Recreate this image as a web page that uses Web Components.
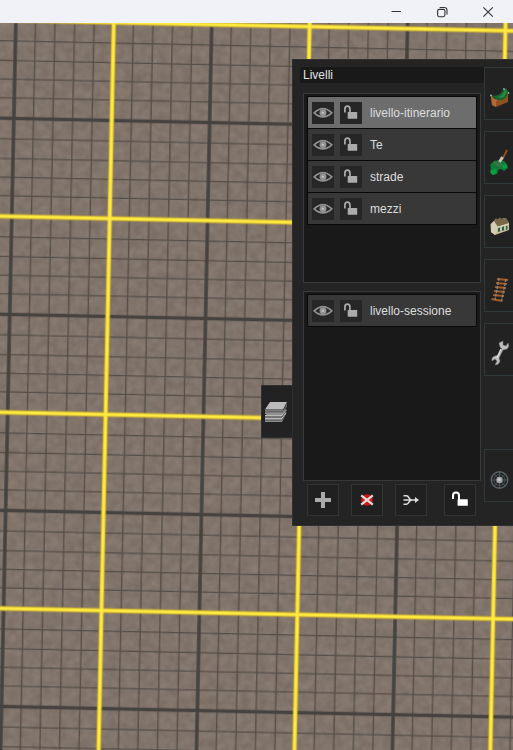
<!DOCTYPE html>
<html lang="it">
<head>
<meta charset="utf-8">
<meta name="viewport" content="width=device-width, initial-scale=1">
<title>Livelli</title>
<style>
html, body { height: 100%; margin: 0; }
body { font: 12px/16px "Liberation Sans", Arial, sans-serif; color: #d8d8d8; overflow: hidden; }
</style>
</head>
<body>
<editor-window></editor-window>
<script>
const icons = {
  minimize: ['0 0 12 12', '<path d="M1.5 5.5h9.5" stroke="#333" fill="none"/>'],
  restore: ['0 0 12 12', '<rect x="1.6" y="3.4" width="7.3" height="7.3" rx="1.6" fill="none" stroke="#333" stroke-width="1.1"/><path d="M3.6 1.5h4.6a2.8 2.8 0 0 1 2.8 2.8v4.3" fill="none" stroke="#333" stroke-width="1.1"/>'],
  close: ['0 0 12 12', '<path d="M1.4 1.3l9.4 9.4M10.8 1.3L1.4 10.7" stroke="#333" stroke-width="1.1" fill="none"/>'],
  eye: ['0 0 20 20', '<path d="M1.2 9.800Q10 1.300 18.800 9.800Q10 18 1.200 9.800Z" fill="none" stroke="#8f8f8f" stroke-width="1.700"/><circle cx="10" cy="9.700" r="3.500" fill="#929292"/><circle cx="10" cy="9.700" r="1.200" fill="#c0c0c0"/>'],
  lock: ['0 0 20 20', '<path d="M3.900 9.500V6a2.500 2.800 0 0 1 5 0V9.800" fill="none" stroke="currentColor" stroke-width="1.700"/><rect x="6.700" y="9" width="9.500" height="6.800" rx=".5" fill="currentColor"/>'],
  bigLock: ['0 0 20 20', '<path d="M3 9V5.600a3 3 0 0 1 6 0V10" fill="none" stroke="#fff" stroke-width="2"/><rect x="7.600" y="9.200" width="10.200" height="6.600" rx=".5" fill="#fff"/>'],
  add: ['0 0 20 20', '<path d="M8 2h4v6h6v4h-6v6H8v-6H2V8h6z" fill="#aaa"/>'],
  remove: ['0 0 20 20', '<circle cx="10" cy="10" r="5.800" fill="#d81512"/><path d="M4.200 5.400l11.600 9.200M15.800 5.400L4.200 14.600" stroke="#dedede" stroke-width="2.200"/>'],
  merge: ['0 0 20 20', '<path d="M2.500 5.800h3c2.500 0 2.500 4.200 5 4.200c-2.500 0-2.500 4.200-5 4.200h-3M2.500 10H16" fill="none" stroke="#ddd" stroke-width="1.600"/><path d="M14 7l4 3-4 3z" fill="#ddd"/>'],
  layers: ['0 0 22 21', '<path d="M0 20v-6l4-5h17l-1 5-3 6z" fill="#8d8d8d"/><path d="M0 16.700h17l4-6M0 13.500h17l4-6" fill="none" stroke="#bbb" stroke-width="1.200"/><path d="M0 15.100h17l4-6M0 18.200h17l3-5" fill="none" stroke="#505050" stroke-width=".8"/><path d="M0 11V8h22l-4 4H0z" fill="#929292"/><path d="M0 7.500L5 0h17l-4 7.500z" fill="#bababa"/><path d="M0 8.500h18l4-7v3l-4 6H0z" fill="#646464"/>'],
  terrain: ['0 0 24 28', '<path d="M2 11l1 10 4 2 12-5V9l-4 6-9 1z" fill="#93501f"/><path d="M2 12l5 4v7l-4-2z" fill="#b26a35"/><path d="M1.500 11q9 3 13-6l3-.5L19.500 8q-2 7-7 8-5 .8-11-5z" fill="#17652b"/><path d="M8 13q6-1 8-8l2 2q-2 6-5 7z" fill="#2b873f"/><g fill="#aaa"><circle cx="2" cy="11.500" r="1"/><circle cx="7" cy="16" r=".7"/><circle cx="15" cy="5" r=".9"/><circle cx="19.500" cy="9" r=".9"/></g>'],
  broom: ['0 0 24 28', '<path d="M18 2l-5 10" stroke="#925126" stroke-width="1.800"/><path d="M1 17l4-4 6-1 4 1 3 3 1 4-4 3-3-2-3 1-1 4-4 1-3-3 1-4z" fill="#107b32"/><path d="M4 15q4-3 8-1l2 4q-5 2-10-3z" fill="#35754a"/><path d="M2 22l5-1 1 4-4 2q-3-1-2-5zM13 17l4-1 1 4-4 1z" fill="#0a9d42"/><path d="M13.500 9l-3 5" stroke="#c8c8ba" stroke-width="2.800"/>'],
  house: ['0 0 24 28', '<path d="M1.500 12l6-5 1 1 2-2 1 1 5-1 3.500 5v7L6 23l-4-3z" fill="#c6bca0"/><path d="M2 12l5-6 2 2 2-3 1 2 5-1 3 5-12 4z" fill="#796848"/><path d="M2 12l3-3 4 6-3 8-4-3z" fill="#d4ccb5"/><path d="M9 16v4l2-.6v-4zm4-1v4l2-.7v-4zm4-1v4l1.500-.5v-4z" fill="#1f6847"/><path d="M9 15l11-3" stroke="#e0d4b8" stroke-width="1.200"/>'],
  rail: ['0 0 24 28', '<path d="M8 3l11 1M7 7l11 1M6 11l11 1M5 15l11 1M4 19l11 1M2.500 23l11 2" stroke="#a65b23" stroke-width="2.200"/><path d="M10 2L6 24M17 3l-4.500 22" stroke="#8a8179" stroke-width="1.400" stroke-dasharray="3 1"/>'],
  wrench: ['0 0 24 28', '<path d="M11 7l-1-4 4-2v4l3 1 2-3q2 3-1 6l-4 1-4 8 1 3q-1 4-5 4l2-4-2-2-3 2q-1-4 3-5l3-1 4-6z" fill="#bdbdbd" stroke="#777" stroke-width=".5"/><path d="M12 9L8 18" stroke="#dedede" stroke-width="1.500"/>'],
  wheel: ['0 0 24 28', '<circle cx="10.500" cy="14" r="8.300" fill="#202526" stroke="#596366" stroke-width="1.400"/><path d="M10.500 6v16M2.500 14h16M5 8.300l11 11.400M16 8.300L5 19.700" stroke="#59635f" stroke-width=".8"/><circle cx="10.500" cy="14" r="5.500" fill="none" stroke="#434c50"/><circle cx="10.500" cy="14" r="3.200" fill="#9da2a4"/><circle cx="10" cy="13.500" r="1.600" fill="#c8c8c8"/>']
};
function glyph(name, w, h = w) {
  const [box, shapes] = icons[name];
  return `<svg aria-hidden="true" width="${w}" height="${h}" viewBox="${box}">${shapes}</svg>`;
}
const reset = `
  * { box-sizing: border-box; }
  svg { display: block; flex: none; }
  button { font: inherit; color: inherit; margin: 0; padding: 0; display: flex; align-items: center; justify-content: center; border-radius: 0; }
`;
class Base extends HTMLElement {
  connectedCallback() {
    if (!this.shadowRoot) {
      this.attachShadow({ mode: 'open' });
      const template = document.createElement('template');
      template.innerHTML = `<style>${reset}</style>${this.render()}`;
      this.shadowRoot.append(template.content.cloneNode(true));
    }
  }
}
customElements.define('window-bar', class extends Base {
  render() {
    return `<style>
      :host { display: flex; justify-content: flex-end; height: 23px; padding-right: 2px; box-sizing: border-box; background: #f0f2f7; }
      button { width: 46px; border: 0; background: none; }
      div { display: flex; }
    </style>
    <div><button aria-label="Riduci a icona">${glyph('minimize', 12)}</button><button aria-label="Ripristina">${glyph('restore', 12)}</button><button aria-label="Chiudi">${glyph('close', 12)}</button></div>`;
  }
});
customElements.define('ground-map', class extends Base {
  render() {
    const minor = [[20, 21], [40, 41], [60, 60], [80, 79], [120, 121], [140, 141], [160, 160], [180, 179]]
      .map(([x, y]) => `M${x} 0V200M0 ${y}H200`).join('');
    return `<style>:host { display: block; overflow: hidden; background: #81746b; } svg { width: 100%; height: 100%; }</style>
    <svg aria-hidden="true"><defs>
      <filter id="grain" x="0" y="0" width="100%" height="100%" color-interpolation-filters="sRGB"><feTurbulence type="fractalNoise" baseFrequency=".12" numOctaves="2" seed="5"/>
      <feColorMatrix values=".09 0 0 0 .463  .09 0 0 0 .411  .09 0 0 0 .374  0 0 0 0 1"/></filter>
      <pattern id="grid" width="200" height="200" patternUnits="userSpaceOnUse" patternTransform="matrix(.979 .0205 -.0205 .98 113.8 -.5)">
        <path d="${minor}" stroke="#4a4540" stroke-opacity=".8" stroke-width="1.400"/>
        <path d="M100 0V200M0 100H200" stroke="#454240" stroke-width="3.600"/>
        <path d="M0 0H200V200H0z" fill="none" stroke="#c3a536" stroke-width="5"/>
        <path d="M0 0H200V200H0z" fill="none" stroke="#ffea3f" stroke-width="3.200"/>
      </pattern></defs>
      <rect width="100%" height="100%" filter="url(#grain)"/><rect width="100%" height="100%" fill="url(#grid)"/></svg>`;
  }
});
customElements.define('layer-row', class extends Base {
  render() {
    return `<style>
      :host { display: flex; align-items: center; padding-left: 4px; min-height: 31px; background: #383838; color: #dedede; }
      :host([selected]) { background: #6d6d6d; }
      button { width: 22px; height: 22px; border: 0; margin-right: 6px; background: #262626; color: #ababab; }
      span { margin-left: 2px; }
    </style>
    <button aria-label="Mostra o nascondi">${glyph('eye', 20)}</button><button aria-label="Blocca o sblocca">${glyph('lock', 20)}</button><span><slot></slot></span>`;
  }
});
customElements.define('layer-list', class extends Base {
  render() {
    return `<style>
      :host { display: block; padding: 2px 3px; border: 1px solid #393939; background: #191919; }
      div { display: grid; gap: 1px; padding: 1px; background: #080808; }
    </style><div><slot></slot></div>`;
  }
});
customElements.define('tool-button', class extends Base {
  render() {
    return `<style>:host { display: block; } button { width: 32px; height: 32px; border: 1px solid #343434; background: #202020; }</style>
    <button aria-label="${this.getAttribute('label')}">${glyph(this.getAttribute('icon'), 20)}</button>`;
  }
});
customElements.define('tool-tab', class extends Base {
  render() {
    return `<style>:host { display: block; } button { width: 100%; height: 53px; padding: 8px 0 0 4px; border: 1px solid #303a3d; border-right: 0; background: #222; justify-content: flex-start; overflow: hidden; }</style>
    <button aria-label="${this.getAttribute('label')}">${glyph(this.getAttribute('icon'), 24, 28)}</button>`;
  }
});
customElements.define('layer-panel', class extends Base {
  render() {
    return `<style>
      :host { display: grid; grid-template-columns: 31px 221px; align-items: start; }
      .handle { height: 53px; margin-top: 326px; border: 1px solid #303030; border-right: 0; background: #222; padding: 2px 2px 0 0; }
      .panel { display: grid; grid-template-columns: 1fr 29px; background: #242424; border: 1px solid #303030; border-right: 0; padding: 7px 0 9px 7px; }
      h2 { margin: 0 0 10px; padding-left: 3px; font: inherit; color: #e4e4e4; background: #191919; }
      layer-list { margin: 0 3px 8px; min-height: 190px; }
      .actions { display: grid; grid-template-columns: 44px 44px 1fr 32px; padding: 0 8px 0 7px; margin-top: -5px; }
      .tabs { display: flex; flex-direction: column; gap: 11px; }
      .tabs tool-tab:last-child { margin-top: 62px; }
    </style>
    <button class="handle" aria-label="Pannello livelli">${glyph('layers', 22, 21)}</button>
    <section class="panel" aria-label="Livelli">
      <div><h2>Livelli</h2>
        <layer-list><layer-row selected>livello-itinerario</layer-row><layer-row>Te</layer-row><layer-row>strade</layer-row><layer-row>mezzi</layer-row></layer-list>
        <layer-list><layer-row>livello-sessione</layer-row></layer-list>
        <div class="actions"><tool-button icon="add" label="Aggiungi"></tool-button><tool-button icon="remove" label="Elimina"></tool-button><tool-button icon="merge" label="Unisci"></tool-button><tool-button icon="bigLock" label="Sblocca"></tool-button></div>
      </div>
      <nav class="tabs" aria-label="Strumenti"><tool-tab icon="terrain" label="Terreno"></tool-tab><tool-tab icon="broom" label="Texture"></tool-tab><tool-tab icon="house" label="Oggetti"></tool-tab><tool-tab icon="rail" label="Binari"></tool-tab><tool-tab icon="wrench" label="Attrezzi"></tool-tab><tool-tab icon="wheel" label="Sistema"></tool-tab></nav>
    </section>`;
  }
});
customElements.define('editor-window', class extends Base {
  render() {
    return `<style>
      :host { display: grid; grid-template-rows: auto 1fr; height: 100%; }
      main { display: grid; min-height: 0; }
      ground-map, layer-panel { grid-area: 1 / 1; min-height: 0; }
      layer-panel { justify-self: end; align-self: start; margin-top: 36px; }
    </style><window-bar></window-bar><main><ground-map></ground-map><layer-panel></layer-panel></main>`;
  }
});
</script>
</body>
</html>
